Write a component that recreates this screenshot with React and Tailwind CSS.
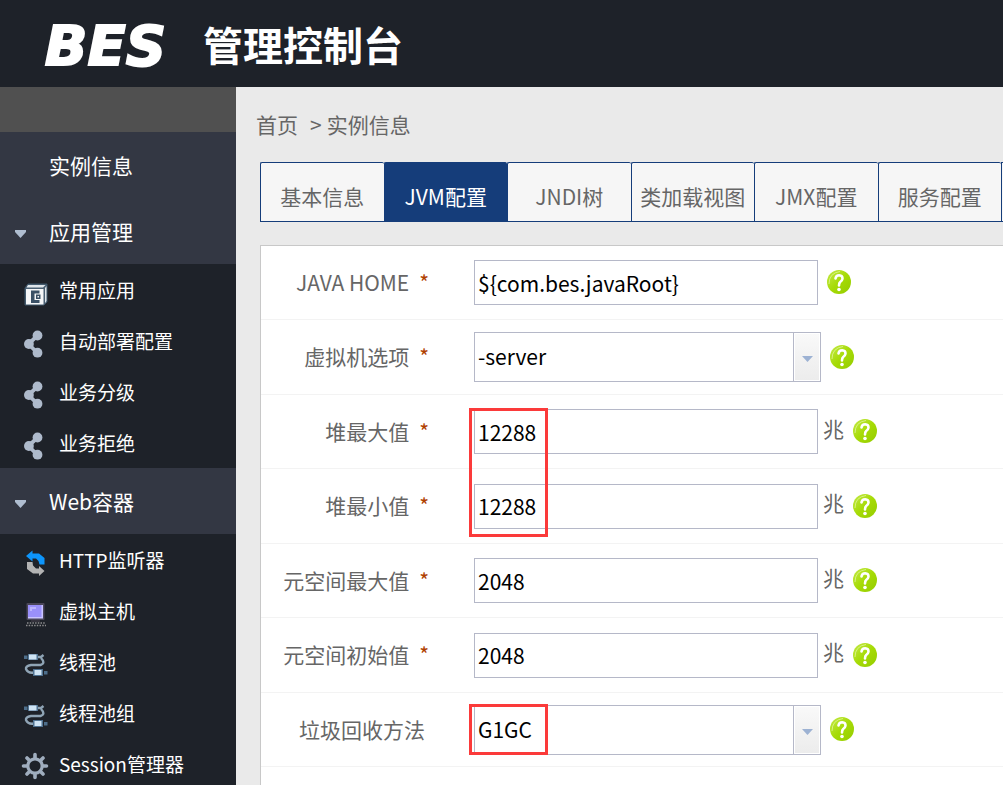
import React, { useState } from 'react';

const AppBoxIcon = () => (
  <svg viewBox="0 0 24 28" className="w-6 h-7" aria-hidden="true">
    <path d="M1 9 L4 5 H23 V23 L20 26 H1 Z" fill="#4b6073" stroke="#3d5468" strokeWidth="1" />
    <path d="M4 6 H21.500 L19 8.500 H2.500 Z" fill="#dfe5ea" />
    <path d="M21 9 L22.500 7 V22 L21 24 Z" fill="#dfe5ea" />
    <rect x="2" y="10" width="17.500" height="15.500" fill="#f5f6f7" />
    <path d="M7 11.500 H15.500 V14.500 H10.500 V21 H15.500 V24 H7 Z" fill="#3a5065" />
    <rect x="12" y="15.500" width="4.500" height="4.500" fill="#3a5065" />
    <rect x="13.500" y="17" width="1.500" height="1.500" fill="#f5f6f7" />
  </svg>
);

const ShareIcon = () => (
  <svg viewBox="0 0 24 28" className="w-6 h-7" aria-hidden="true">
    <path d="M13.500 5.500 L4.500 14 L13.500 23" fill="none" stroke="#aebacb" strokeWidth="3.800" />
    <circle cx="13.500" cy="5.500" r="4.900" fill="#aebacb" />
    <circle cx="4.900" cy="14" r="4.900" fill="#aebacb" />
    <circle cx="13.500" cy="22.700" r="4.900" fill="#aebacb" />
  </svg>
);

const ListenerIcon = () => (
  <svg viewBox="0 0 24 28" className="w-6 h-7" aria-hidden="true">
    <path d="M2 7 L8.500 1.500 V4.500 H15 L20.500 9 V15.500 H15.500 L14.500 12 L12 9.500 H8.500 V12.500 Z" fill="#0d95fb" />
    <path d="M3 13 H8.500 L9 16.500 L12 19.500 H15 V17 L20.500 22 L15 27 V24.500 H9 L3 20 Z" fill="#b3b3b3" />
  </svg>
);

const HostIcon = () => (
  <svg viewBox="0 0 24 28" className="w-6 h-7" aria-hidden="true">
    <rect x="2.500" y="3" width="18" height="17" rx="1" fill="#4a4658" />
    <rect x="4" y="5" width="15" height="13.500" fill="#c9c4ff" />
    <rect x="4" y="5" width="13.500" height="12" fill="#9a90fa" />
    <path d="M6 8 H12 M6 10 H8" stroke="#ddd9ff" strokeWidth="1.200" />
    <rect x="7" y="20" width="9" height="2" fill="#34323c" />
    <path d="M3 23 H21 M2 25.500 H22" stroke="#8a8a8c" strokeWidth="1.500" strokeDasharray="1.500 1.200" />
  </svg>
);

const CableIcon = () => (
  <svg viewBox="0 0 24 28" className="w-6 h-7" aria-hidden="true">
    <path d="M13 6 H17 L19.500 4 M17 7 Q22 12 16.500 14 H7 Q1.500 15 2 18 Q4 22.500 10 21.500" fill="none" stroke="#8fa4b5" strokeWidth="2.400" />
    <rect x="0" y="4.500" width="3.500" height="3.500" fill="#4d6e8b" />
    <rect x="4" y="3" width="10" height="6" fill="#4e7190" />
    <rect x="5" y="3.500" width="7.500" height="5" fill="#cfe4f4" />
    <rect x="9" y="18" width="10" height="7" fill="#4e7190" />
    <rect x="10.500" y="19" width="7" height="5" fill="#cfe4f4" />
    <rect x="20" y="20" width="3.500" height="3.500" fill="#4d6e8b" />
  </svg>
);

const GearIcon = () => (
  <svg viewBox="0 0 24 28" className="w-6 h-7 overflow-visible" aria-hidden="true">
    <g stroke="#9fadbe" strokeWidth="3.600" strokeLinecap="round">
      <path d="M11 1.500 V5 M11 21 V24.500 M-0.500 13 H3 M19 13 H22.500" />
      <path d="M3 5 L5.500 7.500 M16.500 18.500 L19 21 M3 21 L5.500 18.500 M16.500 7.500 L19 5" />
    </g>
    <circle cx="11" cy="13" r="7.200" fill="none" stroke="#9fadbe" strokeWidth="3.200" />
  </svg>
);

const HelpIcon = () => (
  <svg viewBox="0 0 24 24" className="w-6 h-6" aria-hidden="true">
    <defs>
      <linearGradient id="help-fill" x1="0" y1="0" x2="1" y2="1">
        <stop offset="0" stopColor="#c4ea4a" />
        <stop offset="0.5" stopColor="#a6db06" />
        <stop offset="1" stopColor="#94cc00" />
      </linearGradient>
    </defs>
    <circle cx="12" cy="12" r="12" fill="url(#help-fill)" />
    <path d="M2 14 Q2 3 13 1.500" fill="none" stroke="#d8f382" strokeWidth="1" />
    <path d="M8.500 8.500 Q9 5.200 12.200 5.200 Q15.600 5.400 15.500 8.600 Q15.300 10.600 13.200 12 Q12 13 12 15.500" fill="none" stroke="#fff" strokeWidth="2.600" strokeLinecap="round" />
    <circle cx="12" cy="19.500" r="1.800" fill="#fff" />
  </svg>
);

const menu = [
  { title: '实例信息', items: [] },
  {
    title: '应用管理',
    items: [
      { name: '常用应用', Icon: AppBoxIcon },
      { name: '自动部署配置', Icon: ShareIcon },
      { name: '业务分级', Icon: ShareIcon },
      { name: '业务拒绝', Icon: ShareIcon },
    ],
  },
  {
    title: 'Web容器',
    items: [
      { name: 'HTTP监听器', Icon: ListenerIcon },
      { name: '虚拟主机', Icon: HostIcon },
      { name: '线程池', Icon: CableIcon },
      { name: '线程池组', Icon: CableIcon },
      { name: 'Session管理器', Icon: GearIcon },
    ],
  },
];

const tabs = ['基本信息', 'JVM配置', 'JNDI树', '类加载视图', 'JMX配置', '服务配置'];

const fields = [
  { id: 'javaHome', label: 'JAVA HOME', value: '${com.bes.javaRoot}', required: true },
  { id: 'vmOption', label: '虚拟机选项', value: '-server', required: true, options: ['-server', '-client'] },
  { id: 'heapMax', label: '堆最大值', value: '12288', required: true, unit: '兆', mark: 'h-[129px]' },
  { id: 'heapMin', label: '堆最小值', value: '12288', required: true, unit: '兆' },
  { id: 'metaMax', label: '元空间最大值', value: '2048', required: true, unit: '兆' },
  { id: 'metaInit', label: '元空间初始值', value: '2048', required: true, unit: '兆' },
  { id: 'gcMethod', label: '垃圾回收方法', value: 'G1GC', options: ['G1GC', 'ParallelGC', 'CMS'], mark: 'h-[51px]' },
];

const Sidebar = () => (
  <nav className="w-[236px] shrink-0 bg-[#1e2229] text-white overflow-hidden">
    <div className="h-[45px] bg-[#505050]" />
    {menu.map(({ title, items }) => (
      <div key={title}>
        <button className="w-full h-[66px] pt-0.5 flex items-center bg-[#333743] text-[21px] text-left cursor-pointer">
          <span className="w-[49px] pl-[15px] pt-1 shrink-0">
            {items.length > 0 && (
              <svg viewBox="0 0 11 8" className="w-[11px] h-2" aria-hidden="true">
                <path d="M0 0 H11 V2 L5.500 8 L0 2 Z" fill="#afbdd0" />
              </svg>
            )}
          </span>
          {title}
        </button>
        {items.length > 0 && (
          <ul>
            {items.map(({ name, Icon }) => (
              <li key={name}>
                <a href="#" className="h-[51px] pl-6 pt-0.5 flex items-center gap-[11px] text-[19px]">
                  <span className="mt-1"><Icon /></span>
                  {name}
                </a>
              </li>
            ))}
          </ul>
        )}
      </div>
    ))}
  </nav>
);

const Field = ({ id, label, value, required, options, unit, mark }) => {
  const [current, setCurrent] = useState(value);

  return (
    <div className="odd:h-[74px] even:h-[75px] flex items-center border-b border-[#f3f3f3]">
      <label htmlFor={id} className="w-[168px] shrink-0 flex justify-end text-[#666]">
        <span className={required ? '' : 'pr-1'}>{label}</span>
        {required && <span className="ml-2.5 text-[#b04000]">*</span>}
      </label>

      <div className="relative ml-[45px]">
        {options ? (
          <>
            <select
              id={id} value={current} onChange={(e) => setCurrent(e.target.value)}
              className="block w-[347px] h-[50px] pl-[3px] appearance-none border border-[#b5b8c8] bg-white text-black outline-none"
            >
              {options.map((o) => <option key={o}>{o}</option>)}
            </select>
            <span className="absolute right-0 inset-y-0 w-7 border border-[#b5b8c8] p-px pointer-events-none">
              <span className="h-full pt-1 flex items-center justify-center bg-linear-to-b from-[#f9f9f9] to-[#ececec]">
                <svg viewBox="0 0 11 6" className="w-[11px] h-1.5" aria-hidden="true">
                  <path d="M0 0 H11 L5.500 6 Z" fill="#9db2d3" />
                </svg>
              </span>
            </span>
          </>
        ) : (
          <input
            id={id} type="text" value={current} onChange={(e) => setCurrent(e.target.value)}
            className="block w-[344px] h-[45px] px-[3px] border border-[#b5b8c8] bg-white text-black outline-none"
          />
        )}
        {mark && <span className={`absolute -left-[5px] -top-px z-10 w-[79px] border-3 border-[#fb3a3a] pointer-events-none ${mark}`} />}
      </div>

      {unit && <span className="ml-[5px] pb-1.5 text-[#666]">{unit}</span>}
      <button type="button" className="ml-[9px] pb-px cursor-pointer" aria-label={`${label}帮助`}><HelpIcon /></button>
    </div>
  );
};

const App = () => {
  const [activeTab, setActiveTab] = useState('JVM配置');

  return (
    <div lang="zh-CN" className="h-screen flex flex-col overflow-hidden bg-[#eaeaea] font-['Noto_Sans_CJK_SC',sans-serif] text-[21px]">
      {/* Header */}
      <header className="h-[87px] shrink-0 pl-5 pt-1 flex items-center bg-[#1e2229] text-white">
        <span className="w-[183px] pr-3 text-center font-['DejaVu_Sans',sans-serif] text-[56px] leading-none font-bold italic [-webkit-text-stroke:2px_white]">BES</span>
        <h1 className="pb-1 text-[40px] leading-none font-bold">管理控制台</h1>
      </header>

      <div className="flex-1 min-h-0 flex">
        <Sidebar />

        <main className="flex-1 min-w-0 flex flex-col">
          {/* Breadcrumb */}
          <div className="h-[75px] shrink-0 px-5 flex items-center text-[#666]">
            <a href="#">首页</a>
            <span className="ml-3 mr-[5px]">&gt;</span>
            <span>实例信息</span>
          </div>

          {/* Tabs */}
          <div role="tablist" className="h-[60px] shrink-0 ml-6 flex">
            {tabs.map((tab) => (
              <button
                key={tab} role="tab" aria-selected={tab === activeTab} onClick={() => setActiveTab(tab)}
                className={`flex-1 pt-2.5 border-y border-l border-[#153d7a] rounded-t-xs whitespace-nowrap cursor-pointer ${tab === activeTab ? 'bg-[#153d7a] text-white' : 'bg-[#f6f6f6] text-[#666]'}`}
              >
                {tab}
              </button>
            ))}
            <span className="w-0.5 border-y border-l border-[#153d7a] bg-[#f6f6f6]" />
          </div>

          {/* Form */}
          <form className="flex-1 mt-[23px] ml-6 border-t border-l border-[#c8c8c8] bg-white">
            {fields.map((field) => <Field key={field.id} {...field} />)}
          </form>
        </main>
      </div>
    </div>
  );
};

export default App;
